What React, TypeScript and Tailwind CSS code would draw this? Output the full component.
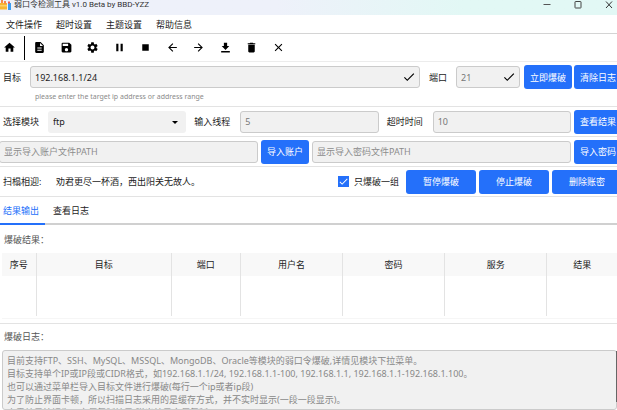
import type { ComponentProps, ReactNode } from "react";
import { clsx } from "clsx";
import {
	MdArrowBack,
	MdArrowForward,
	MdCheck,
	MdClose,
	MdDelete,
	MdDescription,
	MdHome,
	MdPause,
	MdSave,
	MdSettings,
	MdStop,
} from "react-icons/md";

const menus = ["文件操作", "超时设置", "主题设置", "帮助信息"];

function DownloadIcon({ className }: { className?: string }) {
	return (
		<svg viewBox="0 0 24 24" className={className} fill="currentColor" aria-hidden="true">
			<path d="M9 3h6v6h4l-7 7.500L5 9h4zM4 18.500h16V21H4z" />
		</svg>
	);
}

const tools = [
	{ label: "文件", Icon: MdDescription },
	{ label: "保存", Icon: MdSave },
	{ label: "设置", Icon: MdSettings },
	{ label: "暂停", Icon: MdPause },
	{ label: "停止", Icon: MdStop },
	{ label: "后退", Icon: MdArrowBack },
	{ label: "前进", Icon: MdArrowForward },
	{ label: "下载", Icon: DownloadIcon },
	{ label: "删除", Icon: MdDelete },
	{ label: "关闭", Icon: MdClose },
];

const columns = [
	{ name: "序号", width: "w-[34px]" },
	{ name: "目标", width: "w-[135px]" },
	{ name: "端口", width: "w-[69px]" },
	{ name: "用户名", width: "w-[102px]" },
	{ name: "密码", width: "w-[102px]" },
	{ name: "服务", width: "w-[102px]" },
	{ name: "结果", width: "w-[70px]" },
];

const log = `目前支持FTP、SSH、MySQL、MSSQL、MongoDB、Oracle等模块的弱口令爆破,详情见模块下拉菜单。
目标支持单个IP或IP段或CIDR格式，如192.168.1.1/24, 192.168.1.1-100, 192.168.1.1, 192.168.1.1-192.168.1.100。
也可以通过菜单栏导入目标文件进行爆破(每行一个ip或者ip段)
为了防止界面卡顿，所以扫描日志采用的是缓存方式，并不实时显示(一段一段显示)。
查看结果按钮为了方便复制结果(弹出结果方便复制)`;

function Button({ className, ...props }: ComponentProps<"button">) {
	return (
		<button
			type="button"
			className={clsx("h-6 shrink-0 rounded-[3px] bg-[#2470fa] text-white", className)}
			{...props}
		/>
	);
}

function Field({ className, checked, ...props }: ComponentProps<"input"> & { checked?: boolean }) {
	return (
		<div className={clsx("relative", className)}>
			<input
				className="block h-[22px] w-full rounded-[3px] border border-[#cbcbcb] bg-[#f1f1f1] px-1 placeholder:text-[#8c8c8c] disabled:text-[#777]"
				{...props}
			/>
			{checked && <MdCheck className="absolute top-1 right-1 size-3.5 text-black" />}
		</div>
	);
}

function Row({ className, children }: { className?: string; children: ReactNode }) {
	return (
		<div className={clsx("-mr-[5px] flex items-center border-b border-[#e3e3e3] pl-[3px]", className)}>
			{children}
		</div>
	);
}

function TitleBar() {
	return (
		<header className="flex h-[15px] shrink-0 items-start bg-linear-to-r from-[#eef1fa] from-45% to-[#e2f8f5] to-75% text-[#333]">
			<svg viewBox="0 0 11 10" className="h-2.5 w-[11px]" aria-hidden="true">
				<path d="M0 3h7v6.500H0z" fill="#f7b733" />
				<path d="M1 0h2v3H1zM4 1h2v3H4z" fill="#f58a4b" />
				<path d="M0 5h7v1.500H0z" fill="#fbd36b" />
				<path d="M8 3h3v7H8z" fill="#3c9df0" />
				<path d="M8 1.500h2v2H8z" fill="#ef5b52" />
			</svg>
			<h1 className="ml-[3px] flex-1 font-[Roboto,'Noto_Sans_CJK_SC',sans-serif] text-[8px] leading-[10px]">
				弱口令检测工具 v1.0 Beta by BBD-YZZ
			</h1>
			<div className="flex gap-[23px] pr-1">
				<button type="button" aria-label="最小化">
					<svg viewBox="0 0 8 9" className="h-[9px] w-2" stroke="#555">
						<path d="M.5 4.500h7" />
					</svg>
				</button>
				<button type="button" aria-label="最大化">
					<svg viewBox="0 0 8 9" className="h-[9px] w-2" fill="none" stroke="#444">
						<rect x="1" y="1.500" width="6" height="6.500" rx=".5" />
					</svg>
				</button>
				<button type="button" aria-label="关闭窗口">
					<svg viewBox="0 0 8 9" className="h-[9px] w-2" stroke="#333">
						<path d="M1 1.500l6 6.500M7 1.500L1 8" />
					</svg>
				</button>
			</div>
		</header>
	);
}

export default function App() {
	return (
		<div className="flex h-screen flex-col overflow-hidden bg-white font-['Noto_Sans','Noto_Sans_CJK_SC',sans-serif] text-[9px] leading-[13px] text-[#1c1c1c]">
			<TitleBar />

			<nav className="flex h-[19px] shrink-0 items-center gap-[14px] border-b border-[#d4d4d4] pl-1.5">
				{menus.map((menu) => (
					<button type="button" key={menu}>
						{menu}
					</button>
				))}
			</nav>

			<div className="flex h-7 shrink-0 items-center border-b border-[#ececec] pl-[3px]">
				<button type="button" aria-label="主页">
					<MdHome className="size-[13px] text-black" />
				</button>
				<div className="ml-2 h-6 w-px bg-black" />
				<div className="ml-2 flex w-[252px] justify-between">
					{tools.map(({ label, Icon }) => (
						<button type="button" key={label} aria-label={label}>
							<Icon className="size-[13px] text-black" />
						</button>
					))}
				</div>
			</div>

			<Row className="pt-[3px]">
				<div className="flex-1 pb-[3px]">
					<div className="flex items-center">
						<label htmlFor="target" className="w-[27px]">
							目标
						</label>
						<Field id="target" className="flex-1" defaultValue="192.168.1.1/24" checked aria-describedby="target-hint" />
						<label htmlFor="port" className="px-[9px]">
							端口
						</label>
						<Field id="port" className="w-16" value="21" disabled checked />
						<Button className="ml-1 w-12">立即爆破</Button>
						<Button className="ml-0.5 w-12">清除日志</Button>
					</div>
					<p id="target-hint" className="pt-px pl-8 text-[7px] text-[#8a8a8a]">
						please enter the target ip address or address range
					</p>
				</div>
			</Row>

			<Row className="h-[30px]">
				<label htmlFor="module" className="w-[45px]">
					选择模块
				</label>
				<div className="relative flex-1">
					<select id="module" className="block h-[22px] w-full appearance-none rounded-[3px] bg-[#f1f1f1] px-[5px]">
						<option>ftp</option>
					</select>
					<svg viewBox="0 0 6 3" className="pointer-events-none absolute top-2.5 right-2 h-[3px] w-1.5">
						<path d="M0 0h6L3 3z" />
					</svg>
				</div>
				<label htmlFor="threads" className="w-[54px] pl-2">
					输入线程
				</label>
				<Field id="threads" className="flex-1" value="5" disabled />
				<label htmlFor="timeout" className="w-[54px] pl-2">
					超时时间
				</label>
				<Field id="timeout" className="flex-1" value="10" disabled />
				<Button className="ml-[3px] w-12">查看结果</Button>
			</Row>

			<Row className="h-[30px] pl-0">
				<Field className="-ml-1 flex-1" placeholder="显示导入账户文件PATH" aria-label="账户文件" />
				<Button className="mx-[3px] w-12">导入账户</Button>
				<Field className="flex-1" placeholder="显示导入密码文件PATH" aria-label="密码文件" />
				<Button className="ml-[3px] w-12">导入密码</Button>
			</Row>

			<Row className="h-[30px]">
				<p className="w-[53px]">扫榻相迎:</p>
				<p className="flex-1">劝君更尽一杯酒，西出阳关无故人。</p>
				<label className="flex items-center gap-[5px] pr-[7px]">
					<span className="relative size-[11px]">
						<input
							type="checkbox"
							defaultChecked
							className="peer block size-[11px] appearance-none border border-[#2470fa] checked:bg-[#2470fa]"
						/>
						<MdCheck className="pointer-events-none absolute inset-0 hidden size-[11px] text-white peer-checked:block" />
					</span>
					只爆破一组
				</label>
				<div className="flex gap-[3px]">
					<Button className="w-[70px]">暂停爆破</Button>
					<Button className="w-[70px]">停止爆破</Button>
					<Button className="w-[70px]">删除账密</Button>
				</div>
			</Row>

			<div className="flex h-7 shrink-0 border-b-2 border-[#d0d0d0]" role="tablist">
				<button
					type="button"
					role="tab"
					aria-selected="true"
					className="-mb-0.5 w-[45px] border-b-2 border-[#2470fa] pl-[3px] text-left text-[#2470fa]"
				>
					结果输出
				</button>
				<button type="button" role="tab" aria-selected="false" className="px-2">
					查看日志
				</button>
			</div>

			<section className="h-[99px] shrink-0 border-b border-[#e3e3e3] pt-2 pl-0.5">
				<h2 className="pl-0.5 text-[#555]">爆破结果：</h2>
				<table className="mt-[7px] w-full table-fixed">
					<thead className="bg-[#f8f8f8]">
						<tr className="h-[23px]">
							{columns.map(({ name, width }) => (
								<th key={name} className={clsx("border-r border-[#e3e3e3] font-normal last:border-r-0", width)}>
									{name}
								</th>
							))}
						</tr>
					</thead>
					<tbody>
						<tr className="h-10">
							{columns.map(({ name }) => (
								<td key={name} className="border-r border-[#e3e3e3] last:border-r-0" />
							))}
						</tr>
					</tbody>
				</table>
				<div className="mt-0.5 h-px bg-[#f6f6f6]" />
			</section>

			<section className="flex min-h-0 flex-1 flex-col pt-1.5 pl-0.5">
				<label htmlFor="log" className="pl-0.5 text-[#555]">
					爆破日志：
				</label>
				<div className="relative mt-[7px] flex min-h-0 flex-1">
					<textarea
						id="log"
						disabled
						value={log}
						className="w-full flex-1 resize-none overflow-hidden rounded-[3px] border border-[#cbcbcb] bg-[#f1f1f1] px-1 pt-[3px] text-[#888]"
					/>
					<div className="absolute top-px right-0 h-[51px] w-px bg-[#666]" />
				</div>
			</section>
		</div>
	);
}
